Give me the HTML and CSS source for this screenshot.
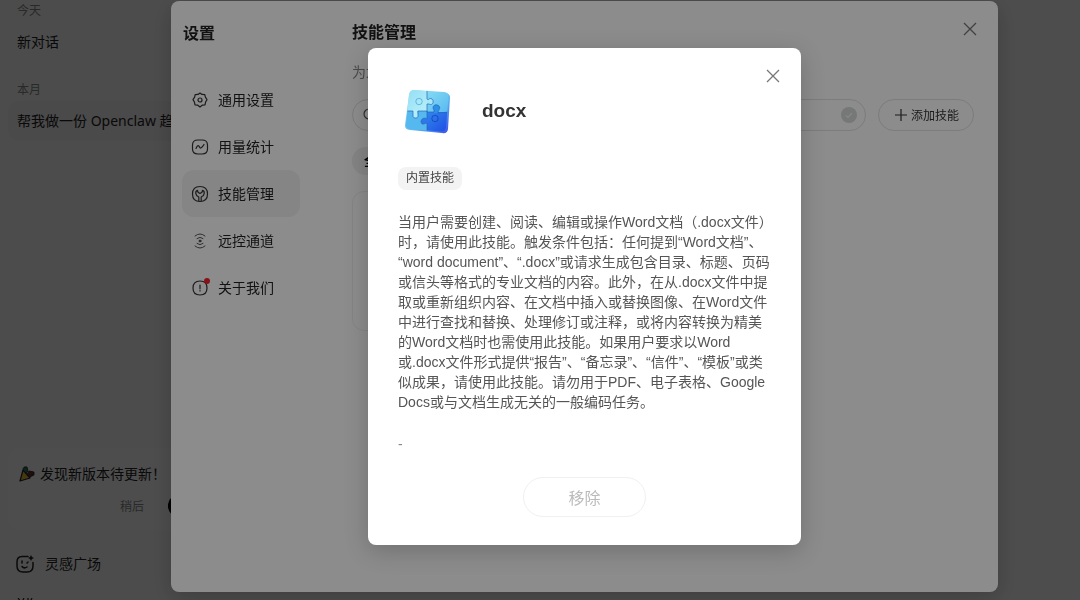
FILE: index.html
```html
<!DOCTYPE html>
<html lang="zh-CN">
  <head>
    <meta charset="UTF-8" />
    <meta name="viewport" content="width=device-width, initial-scale=1.0" />
    <title>技能管理</title>
    <link rel="stylesheet" href="styles.css">
  </head>
  <body>
    <aside class="sidebar">
      <div class="history">
        <h4>今天</h4>
        <a class="chat" href="#">新对话</a>
        <h4>本月</h4>
        <a class="chat active" href="#">帮我做一份 Openclaw 趋势</a>
      </div>
      <div class="update">
        <p class="update-title">
          <svg width="17" height="16" viewBox="0 0 17 16">
            <path d="M5 4 L12 12 L2 15 Z" fill="#e0b83a" stroke="#222" stroke-width="1.2" stroke-linejoin="round" />
            <path d="M5 4 Q5 0 9 1 L10 5 L8 7 Z" fill="#1c7a5c" stroke="#222" stroke-width="0.8" />
            <path d="M9 8 L11 5 L16 6 L16 9 L12 11 Z" fill="#6a2c30" stroke="#222" stroke-width="0.8" />
          </svg>
          发现新版本待更新！
        </p>
        <div class="update-actions">
          <button class="later">稍后</button>
          <button class="now">更新</button>
        </div>
      </div>
      <a class="side-link" href="#">
        <svg width="18" height="18" viewBox="0 0 18 18" fill="none" stroke="#222" stroke-width="1.5" stroke-linecap="round">
          <path d="M12 1.6 H6 Q1 1.6 1 7 V11 Q1 17 7 17 H11 Q17 17 17 11 V7.5" />
          <path d="M6 6 V8 M12 7 L11 8 M6 11.5 Q8 14 11 12" />
          <path d="M15 0 L16 2 L18 3 L16 4 L15 6 L14 4 L12 3 L14 2 Z" fill="#222" stroke="none" />
        </svg>
        灵感广场
      </a>
      <a class="side-link last" href="#" aria-label="更多">
        <svg width="18" height="18" viewBox="0 0 18 18" fill="none" stroke="#222" stroke-width="1.2">
          <path d="M2 0 L5 4 L5 17 M8 0 L6 4 M12 0 V17 M16 0 L14 4" />
        </svg>
      </a>
    </aside>

    <div class="mask">
      <div class="settings">
        <nav class="menu">
          <h2>设置</h2>
          <a href="#">
            <svg width="18" height="18" viewBox="0 0 18 18" class="line">
              <path d="M9 2 L11 3.4 L13.8 3.6 L14.4 6.2 L16 8.6 L14.6 11 L14 13.8 L11.2 14.2 L9 16 L6.8 14.2 L4 13.8 L3.4 11 L2 8.6 L3.6 6.2 L4.2 3.6 L7 3.4 Z" />
              <circle cx="9" cy="9" r="2" />
            </svg>
            通用设置
          </a>
          <a href="#">
            <svg width="18" height="18" viewBox="0 0 18 18" class="line">
              <path d="M7 2 H11 Q16.5 2 16.5 7 V11 Q16.5 16 11 16 H7 Q1.5 16 1.5 11 V7 Q1.5 2 7 2 Z" />
              <path d="M5 10.5 Q7 6 8.2 8.5 T10.5 9.5 Q11.5 9 13 6.5" />
            </svg>
            用量统计
          </a>
          <a class="active" href="#">
            <svg width="18" height="18" viewBox="0 0 18 18" class="line">
              <path d="M9 1.5 Q16.5 1.5 16.5 9 Q16.5 16.5 9 16.5 Q1.5 16.5 1.5 9 Q1.5 1.5 9 1.5 Z" />
              <path d="M7.8 16 V12 C4 10.500 4 6 6.500 5.300 L7 7.200 L9 8.500 L11 7.200 L11.500 5.300 C14 6 14 10.500 10.200 12 V16" />
            </svg>
            技能管理
          </a>
          <a href="#">
            <svg width="18" height="18" viewBox="0 0 18 18" class="line thin">
              <circle cx="9" cy="9" r="1" fill="#222" />
              <path d="M6 6.5 Q9 4 12 6.5 M4 4 Q9 -0.2 14 4 M6 11.5 Q9 14 12 11.5 M4 14 Q9 18.2 14 14" />
            </svg>
            远控通道
          </a>
          <a href="#">
            <svg width="18" height="18" viewBox="0 0 18 18" class="line">
              <path d="M9 2 Q16 2 16 9 Q16 16 9 16 Q2 16 2 9 Q2 2 9 2 Z" />
              <path d="M9 6 V9.8 M9 11.5 V12" />
            </svg>
            <i class="dot"></i>
            关于我们
          </a>
        </nav>
        <section class="skills">
          <h2>技能管理</h2>
          <p class="desc">为龙</p>
          <div class="toolbar">
            <div class="search">
              <svg width="14" height="14" viewBox="0 0 14 14" fill="none" stroke="#555" stroke-width="1.2">
                <circle cx="6" cy="6" r="5" />
                <path d="M10 10 L13 13" />
              </svg>
              <input type="text" aria-label="搜索技能" />
              <svg width="16" height="16" viewBox="0 0 16 16">
                <circle cx="8" cy="8" r="8" fill="#d6dad9" />
                <path d="M5 8.5 L7 10.5 L11 6" fill="none" stroke="#f4f4f4" stroke-width="1.2" />
              </svg>
            </div>
            <button class="add">
              <svg width="12" height="12" viewBox="0 0 12 12" stroke="#333" stroke-width="1.2">
                <path d="M6 0 V12 M0 6 H12" />
              </svg>
              添加技能
            </button>
          </div>
          <button class="tab">全部</button>
          <div class="card"></div>
        </section>
        <button class="close" aria-label="关闭设置">
          <svg width="12" height="12" viewBox="0 0 12 12"><path d="M0 0 L12 12 M12 0 L0 12" /></svg>
        </button>
      </div>
    </div>

    <div class="mask">
      <div class="modal" role="dialog">
        <button class="close" aria-label="关闭">
          <svg width="12" height="12" viewBox="0 0 12 12"><path d="M0 0 L12 12 M12 0 L0 12" /></svg>
        </button>
        <div class="modal-head">
          <svg width="60" height="60" viewBox="0 0 60 60">
            <defs>
              <linearGradient id="edge" x1="0" y1="0" x2="1" y2="1">
                <stop offset="0" stop-color="#a9e6f8" />
                <stop offset="0.6" stop-color="#5bb4f0" />
                <stop offset="1" stop-color="#3c4cea" />
              </linearGradient>
              <linearGradient id="light" x1="0" y1="0" x2="1" y2="1">
                <stop offset="0" stop-color="#8fdcf4" />
                <stop offset="1" stop-color="#b8f0fa" />
              </linearGradient>
              <linearGradient id="sky" x1="0" y1="0" x2="1" y2="1">
                <stop offset="0" stop-color="#86dcf5" />
                <stop offset="1" stop-color="#55b5ee" />
              </linearGradient>
              <linearGradient id="deep" x1="0" y1="0" x2="1" y2="1">
                <stop offset="0" stop-color="#2f86ee" />
                <stop offset="1" stop-color="#1d3fe0" />
              </linearGradient>
              <clipPath id="face">
                <path d="M16 9 L46 11 Q51 11.5 50.5 16 L48 46 Q47.5 51 43 50.5 L12 48 Q7.5 47.5 8 43 L11 14 Q11.5 9 16 9 Z" />
              </clipPath>
            </defs>
            <path d="M17 9 L47 12 Q52.500 12.500 52 17 L50 48 Q49.500 53 44 52 L12 49 Q6.500 48.500 7 44 L11 14 Q11.500 9 17 9 Z" fill="url(#edge)" />
            <g clip-path="url(#face)">
              <rect x="5" y="8" width="25" height="23" fill="url(#light)" />
              <rect x="29" y="8" width="26" height="24" fill="url(#sky)" />
              <rect x="5" y="30" width="25" height="24" fill="#55b8ee" />
              <rect x="29" y="31" width="26" height="24" fill="url(#deep)" />
              <path d="M29 18 C31 20 31 16 34 18 C37 21 34 25 31 23 L29 23 Z" fill="#a5e8f8" />
              <path d="M15 29 V34 C14 38 21 38 20 34 L19 29 Z" fill="#b3edfa" />
              <path d="M36 32 V29 C33 25 38 22 41 25 C43 28 40 28 40 32 Z" fill="#2c8fe8" />
              <path d="M29 38 C26 36 23 38 23 41 C24 45 27 42 29 42 Z" fill="#2f78e8" />
              <g fill="none" stroke="#2766b8" stroke-width="0.7">
                <path d="M29 8 V18 C31 20 31 16 34 18 C37 21 34 25 31 23 H29 V31 H36 V29 C33 25 38 22 41 25 C43 28 40 29 40 32 L51 31" />
                <path d="M8 30 H15 V34 C14 38 21 38 20 34 V30 H29 V38 C26 36 23 38 23 41 C24 45 27 42 29 42 V52" />
                <circle cx="21" cy="20.5" r="3.2" stroke="#4aa2d8" />
                <circle cx="37" cy="37.5" r="3.2" stroke="#153cae" />
              </g>
            </g>
          </svg>
          <h1>docx</h1>
        </div>
        <span class="tag">内置技能</span>
        <p class="text">当用户需要创建、阅读、编辑或操作Word文档（.docx文件）时，请使用此技能。触发条件包括：任何提到“Word文档”、“word document”、“.docx”或请求生成包含目录、标题、页码或信头等格式的专业文档的内容。此外，在从.docx文件中提取或重新组织内容、在文档中插入或替换图像、在Word文件中进行查找和替换、处理修订或注释，或将内容转换为精美的Word文档时也需使用此技能。如果用户要求以Word或.docx文件形式提供“报告”、“备忘录”、“信件”、“模板”或类似成果，请使用此技能。请勿用于PDF、电子表格、Google Docs或与文档生成无关的一般编码任务。</p>
        <p class="extra">-</p>
        <button class="remove" disabled>移除</button>
      </div>
    </div>
  </body>
</html>
```
FILE: styles.css
```css
* {
  margin: 0;
  padding: 0;
  box-sizing: border-box;
}

body {
  height: 100vh;
  overflow: hidden;
  background: #fff;
  color: #222;
  font-family: "Noto Sans", "Noto Sans CJK SC", sans-serif;
  font-size: 14px;
  line-height: 20px;
}

a {
  color: inherit;
  text-decoration: none;
}

button,
input {
  font-family: inherit;
  border: none;
  background: none;
}

.sidebar {
  display: flex;
  flex-direction: column;
  width: 240px;
  height: calc(100vh + 30px);
  padding: 0 8px;
  background: #fcfcfc;
}

.history {
  flex: 1;
}

.history h4 {
  padding: 1px 9px;
  font-size: 12px;
  font-weight: normal;
  color: #888;
}

.chat {
  display: block;
  height: 40px;
  margin-bottom: 17px;
  padding: 0 9px;
  line-height: 40px;
  white-space: nowrap;
  border-radius: 12px;
}

.chat.active {
  background: #f3f3f3;
}

.update {
  height: 82px;
  margin-bottom: 14px;
  padding: 16px 10px;
  background: #fff;
  border-radius: 12px;
}

.update-title {
  display: flex;
  align-items: center;
  gap: 5px;
}

.update-actions {
  display: flex;
  justify-content: flex-end;
  gap: 24px;
  padding-top: 10px;
}

.update-actions button {
  height: 24px;
  font-size: 12px;
}

.later {
  color: #888;
}

.update-actions .now {
  width: 54px;
  background: #000;
  color: #fff;
  border-radius: 12px;
}

.side-link {
  display: flex;
  align-items: center;
  gap: 11px;
  height: 40px;
  padding: 0 8px;
}

.side-link.last {
  height: 46px;
}

.mask {
  position: fixed;
  inset: 0;
  display: flex;
  justify-content: center;
  align-items: flex-start;
  padding-left: 89px;
  background: rgba(0, 0, 0, 0.45);
}

.settings {
  position: relative;
  display: flex;
  width: 827px;
  max-width: 100%;
  height: calc(100vh - 9px);
  margin-top: 1px;
  background: #fff;
  border-radius: 8px;
  box-shadow: 0 6px 24px rgba(0, 0, 0, 0.2);
}

.settings h2 {
  font-size: 16px;
  line-height: 24px;
}

.menu {
  width: 141px;
  padding: 20px 12px 0 11px;
}

.menu h2 {
  margin-bottom: 31px;
  padding-left: 1px;
}

.menu a {
  position: relative;
  display: flex;
  align-items: center;
  gap: 9px;
  height: 47px;
  padding-left: 9px;
  border-radius: 12px;
}

.menu a.active {
  background: #f2f2f2;
}

.line {
  fill: none;
  stroke: #333;
  stroke-width: 1.2;
  stroke-linecap: round;
  stroke-linejoin: round;
}

.line.thin {
  stroke: #555;
  stroke-width: 1;
}

.dot {
  position: absolute;
  left: 22px;
  top: 14px;
  width: 6px;
  height: 6px;
  background: #f5222d;
  border-radius: 50%;
}

.skills {
  flex: 1;
  padding: 19px 24px 0 40px;
}

.desc {
  margin: 18px 0 17px;
  color: #888;
}

.toolbar {
  display: flex;
  gap: 12px;
  margin-bottom: 16px;
}

.search {
  flex: 1;
  display: flex;
  align-items: center;
  gap: 8px;
  height: 32px;
  padding: 0 8px 0 10px;
  border: 1px solid #e2e2e2;
  border-radius: 16px;
}

.search input {
  flex: 1;
  outline: none;
}

.add {
  display: flex;
  justify-content: center;
  align-items: center;
  gap: 4px;
  width: 96px;
  padding-left: 2px;
  border: 1px solid #e2e2e2;
  border-radius: 16px;
  font-size: 12px;
  color: #333;
}

.tab {
  width: 48px;
  height: 28px;
  background: #f0f0f0;
  border-radius: 14px;
  font-size: 12px;
  font-weight: bold;
}

.card {
  width: 304px;
  height: 140px;
  margin-top: 16px;
  border: 1px solid #f0f0f0;
  border-radius: 12px;
}

.close {
  position: absolute;
  top: 22px;
  right: 22px;
  width: 12px;
  height: 12px;
  cursor: pointer;
}

.close svg {
  display: block;
  overflow: visible;
  stroke: #777;
  stroke-width: 1.3;
}

.modal {
  position: relative;
  width: 433px;
  margin-top: 48px;
  padding: 33px 30px 28px;
  background: #fff;
  border-radius: 8px;
  box-shadow: 0 6px 24px rgba(0, 0, 0, 0.2);
  font-family: "Liberation Sans", "Noto Sans CJK SC", sans-serif;
}

.modal-head {
  display: flex;
  align-items: center;
  gap: 24px;
  margin-bottom: 26px;
}

.modal h1 {
  font-size: 19px;
  line-height: 28px;
  color: #333;
}

.tag {
  display: block;
  width: max-content;
  padding: 0 8px;
  background: #f3f3f3;
  border-radius: 8px;
  font-size: 12px;
  line-height: 23px;
  color: #444;
}

.text {
  margin: 22px 0;
  color: #555;
}

.extra {
  margin-bottom: 23px;
  color: #888;
}

.remove {
  display: block;
  width: 123px;
  height: 40px;
  margin: 0 auto;
  border: 1px solid #f0f0f0;
  border-radius: 20px;
  font-size: 16px;
  color: #bbb;
}
```
